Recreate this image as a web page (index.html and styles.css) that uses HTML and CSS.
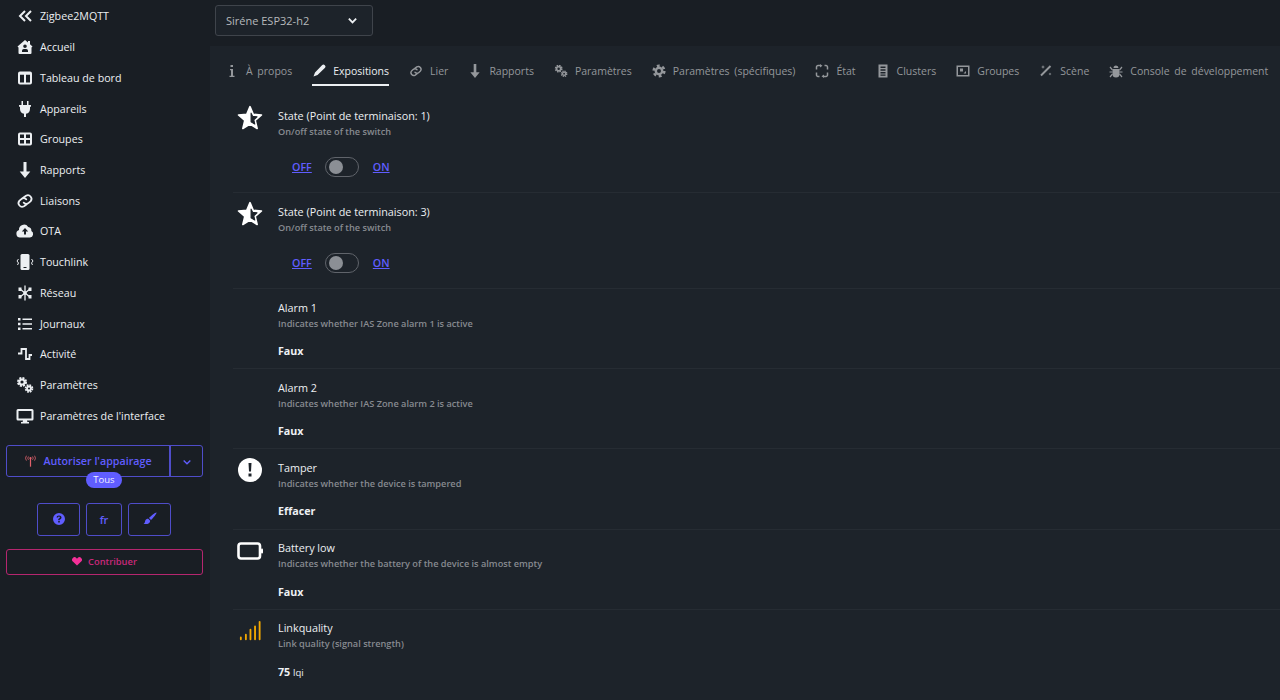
FILE: index.html
```html
<!DOCTYPE html>
<html lang="fr">
<head>
  <meta charset="UTF-8">
  <title>Zigbee2MQTT</title>
  <link rel="stylesheet" href="styles.css">
</head>
<body>

  <svg class="defs" width="0" height="0">
    <symbol id="i-down" viewBox="0 0 16 16"><path d="M6.500 0h3v9.500h3.800L8 16 2.700 9.500h3.800z" fill="currentColor"/></symbol>
    <symbol id="i-link" viewBox="0 0 18 16"><g fill="none" stroke="currentColor" stroke-width="1.800" stroke-linecap="round"><path d="M7.500 4.500 10 2.800a3.600 3.600 0 0 1 4.700 5.300l-2 1.800a3.600 3.600 0 0 1-5-.2"/><path d="M10.500 11.500 8 13.200a3.600 3.600 0 0 1-4.700-5.300l2-1.800a3.600 3.600 0 0 1 5 .2"/></g></symbol>
    <symbol id="i-gears" viewBox="0 0 18 16"><g fill="none" stroke="currentColor"><circle cx="6" cy="5" r="2.600" stroke-width="2"/><circle cx="6" cy="5" r="4" stroke-width="2" stroke-dasharray="2 1.140"/><circle cx="13" cy="11.500" r="2" stroke-width="1.800"/><circle cx="13" cy="11.500" r="3.400" stroke-width="1.800" stroke-dasharray="1.700 .97"/></g></symbol>
    <symbol id="i-star" viewBox="1 1 24 24"><path d="M13 2.500l3 7 7.600.7-5.800 5 1.800 7.500L13 18.700l-6.600 4 1.800-7.500-5.800-5 7.600-.7z" fill="#fff" stroke="#fff" stroke-width="1.500" stroke-linejoin="round"/><path d="M14 8.500l1.500 3 4 .4-3 2.700.9 4-3.400-2z" fill="#1d232a" stroke="#1d232a" stroke-linejoin="round"/></symbol>
  </svg>

  <aside class="sidebar">
    <nav class="side-nav">
      <a class="side-link"><svg class="side-icon" viewBox="0 0 16 16"><path d="M8 3 3 8l5 5M14 3 9 8l5 5" fill="none" stroke="currentColor" stroke-width="2"/></svg>Zigbee2MQTT</a>
      <a class="side-link"><svg class="side-icon" viewBox="0 0 16 16"><path fill-rule="evenodd" d="M8 1l3 2.500V2h2v3.200L15.500 7.500 14.500 8.500V14a1 1 0 0 1-1 1h-11a1 1 0 0 1-1-1V8.500L.5 7.500zM8 5.500a1.800 1.800 0 1 0 0 3.600 1.800 1.800 0 0 0 0-3.600zM5 13h6v-1.200A1.800 1.800 0 0 0 9.200 10H6.800A1.800 1.800 0 0 0 5 11.800z" fill="currentColor"/></svg>Accueil</a>
      <a class="side-link"><svg class="side-icon" viewBox="0 0 16 16"><path fill-rule="evenodd" d="M3 1.500h10a2 2 0 0 1 2 2v9a2 2 0 0 1-2 2H3a2 2 0 0 1-2-2v-9a2 2 0 0 1 2-2zm0 3.300v7.700h4V4.800zm6 0v7.700h4V4.800z" fill="currentColor"/></svg>Tableau de bord</a>
      <a class="side-link"><svg class="side-icon" viewBox="0 0 16 16"><path d="M4.500 0H6v4h4V0h1.500v4h2.500v1.700h-1V8a5 5 0 0 1-4 4.800V16H7v-3.200A5 5 0 0 1 3 8V5.700H2V4h2.500z" fill="currentColor"/></svg>Appareils</a>
      <a class="side-link"><svg class="side-icon" viewBox="0 0 16 16"><path fill-rule="evenodd" d="M3 1.500h10a2 2 0 0 1 2 2v9a2 2 0 0 1-2 2H3a2 2 0 0 1-2-2v-9a2 2 0 0 1 2-2zm0 2v3.500h4V3.500zm6 0v3.500h4V3.500zM3 9v3.500h4V9zm6 0v3.500h4V9z" fill="currentColor"/></svg>Groupes</a>
      <a class="side-link"><svg class="side-icon" viewBox="0 0 16 16"><use href="#i-down"/></svg>Rapports</a>
      <a class="side-link"><svg class="side-icon side-icon-wide" viewBox="0 0 18 16"><use href="#i-link"/></svg>Liaisons</a>
      <a class="side-link"><svg class="side-icon side-icon-wide" viewBox="0 0 18 14"><path fill-rule="evenodd" d="M4 13.500a3.800 3.800 0 0 1-1-7.400A5 5 0 0 1 12.200 3 3.800 3.800 0 0 1 15.400 7 3.500 3.500 0 0 1 14 13.500zM9 4 5.800 7.500h2.200v3h2v-3h2.200z" fill="currentColor"/></svg>OTA</a>
      <a class="side-link"><svg class="side-icon side-icon-wide" viewBox="0 0 18 16"><rect x="4.500" y="0" width="9" height="16" rx="1.500" fill="currentColor"/><rect x="7.500" y="13" width="3" height="1" fill="#191e24"/><path d="M2.500 5 1 7l1.500 2-1 2M15.500 5 17 7l-1.500 2 1 2" fill="none" stroke="currentColor"/></svg>Touchlink</a>
      <a class="side-link"><svg class="side-icon" viewBox="0 0 16 16"><path d="M3 4 8 8 3 12M13 4 8 8l5 4M8 .5v15" fill="none" stroke="currentColor" stroke-width="1.300"/><path d="M1.500 2.500h3V6h-3zM11.500 2.500h3V6h-3zM1.500 10h3v3.500h-3zM11.500 10h3v3.500h-3z" fill="currentColor"/><circle cx="8" cy="8" r="1.800" fill="currentColor"/></svg>Réseau</a>
      <a class="side-link"><svg class="side-icon" viewBox="0 0 16 16"><path d="M1 2h2.500v2.500H1zM1 6.800h2.500v2.500H1zM1 11.500h2.500V14H1zM5.500 2.500H15V4H5.500zM5.500 7.200H15v1.500H5.500zM5.500 12H15v1.500H5.500z" fill="currentColor"/></svg>Journaux</a>
      <a class="side-link"><svg class="side-icon" viewBox="0 0 16 16"><path d="M1 7.500h3.500V3h4.500v10h3.500V9H15" fill="none" stroke="currentColor" stroke-width="1.800"/></svg>Activité</a>
      <a class="side-link"><svg class="side-icon side-icon-wide" viewBox="0 0 18 16"><use href="#i-gears"/></svg>Paramètres</a>
      <a class="side-link"><svg class="side-icon side-icon-wide" viewBox="0 0 18 16"><path fill-rule="evenodd" d="M2 1h14a1.500 1.500 0 0 1 1.500 1.500v8.500A1.500 1.500 0 0 1 16 12.500h-5l.4 1.500H13v1.500H5V14h1.600l.4-1.500H2A1.500 1.500 0 0 1 .5 11V2.500A1.500 1.500 0 0 1 2 1zm.500 2v7.500h13V3z" fill="currentColor"/></svg>Paramètres de l'interface</a>
    </nav>

    <div class="join-wrap">
      <div class="join-group">
        <button class="join-main"><svg class="tower" viewBox="0 0 16 14"><path d="M8 3v11" stroke="currentColor" stroke-width="1.500"/><circle cx="8" cy="3.500" r="1.300" fill="currentColor"/><path d="M5.500 1.500a3 3 0 0 0 0 4M10.500 1.500a3 3 0 0 1 0 4M3 .5a5 5 0 0 0 0 6M13 .5a5 5 0 0 1 0 6" fill="none" stroke="currentColor"/></svg>Autoriser l'appairage</button>
        <button class="join-more"><svg class="chev" viewBox="0 0 12 8"><path d="M2 1.500l4 4 4-4" fill="none" stroke="currentColor" stroke-width="1.600"/></svg></button>
      </div>
      <span class="badge">Tous</span>
    </div>

    <div class="tools">
      <button class="tool tool-wide"><svg class="tool-icon" viewBox="0 0 12 12"><path fill-rule="evenodd" d="M6 0a6 6 0 1 1 0 12A6 6 0 0 1 6 0zm-.8 7.200h1.600v-.7c1.200-.6 1.700-1.200 1.700-2.100C8.500 3.200 7.500 2.400 6 2.400S3.600 3.100 3.500 4.400h1.500c.1-.5.400-.8 1-.8.500 0 .9.300.9.800 0 .4-.3.700-1 1-.5.300-.7.600-.7 1.100zM5.200 8v1.500h1.600V8z" fill="currentColor"/></svg></button>
      <button class="tool tool-lang">fr</button>
      <button class="tool tool-wide"><svg class="tool-icon tool-brush" viewBox="0 0 14 14"><path d="M13.500.5c.5.500-3.500 6-5.500 7.500L6 6C7.500 4 13 0 13.500.5zM5.300 6.800l1.900 1.900c-.3 2.500-2 3.800-6.700 3.300 1.500-1 1.300-2 1.800-3.500.5-1.200 1.800-1.900 3-1.700z" fill="currentColor"/></svg></button>
    </div>

    <button class="donate"><svg class="heart" viewBox="0 0 12 11"><path d="M6 10.500.9 5.500A3 3 0 0 1 5.200 1.200L6 2l.8-.8a3 3 0 0 1 4.300 4.300z" fill="currentColor"/></svg>Contribuer</button>
  </aside>

  <div class="main">
    <header class="topbar">
      <div class="device-select">
        <span>Siréne ESP32-h2</span>
        <svg class="chev-white" viewBox="0 0 12 8"><path d="M2 1.500l4 4 4-4" fill="none" stroke="currentColor" stroke-width="2"/></svg>
      </div>
    </header>

    <section class="panel">
      <div class="tabs">
        <a class="tab"><svg class="tab-icon" viewBox="0 0 14 14"><path d="M5.500 1h2.500v2H5.500zM5 5h3v6.700h1.500V13h-5v-1.300H6V6.300H5z" fill="currentColor"/></svg>À propos</a>
        <a class="tab tab-active"><svg class="tab-icon" viewBox="0 0 14 14"><path d="M10 1.200a1.500 1.500 0 0 1 2.800 2.800L5.500 11 1.500 12.500l1.500-4z" fill="currentColor"/></svg>Expositions</a>
        <a class="tab"><svg class="tab-icon" viewBox="0 0 18 16"><use href="#i-link"/></svg>Lier</a>
        <a class="tab"><svg class="tab-icon" viewBox="0 0 16 16"><use href="#i-down"/></svg>Rapports</a>
        <a class="tab"><svg class="tab-icon" viewBox="0 0 18 16"><use href="#i-gears"/></svg>Paramètres</a>
        <a class="tab"><svg class="tab-icon" viewBox="0 0 14 14"><circle cx="7" cy="7" r="3.200" fill="none" stroke="currentColor" stroke-width="2.400"/><circle cx="7" cy="7" r="5.300" fill="none" stroke="currentColor" stroke-width="2.600" stroke-dasharray="2.800 2.750"/></svg>Paramètres (spécifiques)</a>
        <a class="tab"><svg class="tab-icon" viewBox="0 0 14 14"><path d="M5 1.500H3A1.500 1.500 0 0 0 1.500 3v2.500M9 12.500h2A1.500 1.500 0 0 0 12.500 11V8.500M1.500 8.500V11A1.500 1.500 0 0 0 3 12.500h1.500M12.500 5.500V3A1.500 1.500 0 0 0 11 1.500H9.500" fill="none" stroke="currentColor" stroke-width="1.500"/><path d="M5 0v3.500L7.500 1.700zM9 14v-3.500l-2.500 1.800z" fill="currentColor"/></svg>État</a>
        <a class="tab"><svg class="tab-icon" viewBox="0 0 14 14"><path fill-rule="evenodd" d="M2.500 .5h9v13h-9zM4.500 2.500v1.500h5V2.500zM4.500 5.300v1.500h5V5.300zM4.500 8.100v1.500h5V8.100zM4.500 10.500v1.200h5v-1.200z" fill="currentColor"/></svg>Clusters</a>
        <a class="tab"><svg class="tab-icon" viewBox="0 0 14 14"><path fill-rule="evenodd" d="M.5 1.500h13v11H.5zM2 3v8h10V3z" fill="currentColor"/><path d="M4 4.500h3v3H4zM7.500 9.500 10 7v2.500z" fill="currentColor"/></svg>Groupes</a>
        <a class="tab"><svg class="tab-icon" viewBox="0 0 14 14"><path d="M11.500 2 2 11.500" stroke="currentColor" stroke-width="2"/><path d="M4 1l.5 1.500L6 3l-1.500.5L4 5l-.5-1.500L2 3l1.500-.5zM11 8.500l.4 1.100 1.100.4-1.100.4-.4 1.100-.4-1.100-1.100-.4 1.100-.4z" fill="currentColor"/></svg>Scène</a>
        <a class="tab"><svg class="tab-icon" viewBox="0 0 14 14"><path d="M4.500 4a2.500 2.500 0 0 1 5 0zM4 5h6a1 1 0 0 1 .5 1v4a3.500 3.500 0 0 1-7 0V6A1 1 0 0 1 4 5z" fill="currentColor"/><path d="M1 3l2.500 3M13 3l-2.500 3M.5 8h3M13.500 8h-3M1 13l2.500-3M13 13l-2.500-3" stroke="currentColor" stroke-width="1.200"/></svg>Console de développement</a>
      </div>

      <div class="row row-tall">
        <svg class="row-icon" viewBox="0 0 26 26"><use href="#i-star"/></svg>
        <div class="row-body">
          <div class="row-title">State (Point de terminaison: 1)</div>
          <div class="row-desc">On/off state of the switch</div>
          <div class="switch-line">
            <a class="switch-label">OFF</a>
            <span class="switch"><span class="knob"></span></span>
            <a class="switch-label">ON</a>
          </div>
        </div>
      </div>

      <div class="row row-tall">
        <svg class="row-icon" viewBox="0 0 26 26"><use href="#i-star"/></svg>
        <div class="row-body">
          <div class="row-title">State (Point de terminaison: 3)</div>
          <div class="row-desc">On/off state of the switch</div>
          <div class="switch-line">
            <a class="switch-label">OFF</a>
            <span class="switch"><span class="knob"></span></span>
            <a class="switch-label">ON</a>
          </div>
        </div>
      </div>

      <div class="row">
        <span class="row-icon"></span>
        <div class="row-body">
          <div class="row-title">Alarm 1</div>
          <div class="row-desc">Indicates whether IAS Zone alarm 1 is active</div>
          <div class="row-value">Faux</div>
        </div>
      </div>

      <div class="row">
        <span class="row-icon"></span>
        <div class="row-body">
          <div class="row-title">Alarm 2</div>
          <div class="row-desc">Indicates whether IAS Zone alarm 2 is active</div>
          <div class="row-value">Faux</div>
        </div>
      </div>

      <div class="row">
        <svg class="row-icon" viewBox="0 0 26 26"><circle cx="13" cy="13" r="12" fill="#fff"/><path d="M11.500 6h3l-.5 8.500h-2zM11.500 16.500h3v3h-3z" fill="#1d232a"/></svg>
        <div class="row-body">
          <div class="row-title">Tamper</div>
          <div class="row-desc">Indicates whether the device is tampered</div>
          <div class="row-value">Effacer</div>
        </div>
      </div>

      <div class="row">
        <svg class="row-icon" viewBox="0 0 26 26"><rect x="1.500" y="5.500" width="21.500" height="15" rx="2.500" fill="none" stroke="#fff" stroke-width="2.600"/><rect x="24" y="10.500" width="2" height="5" rx="1" fill="#fff"/></svg>
        <div class="row-body">
          <div class="row-title">Battery low</div>
          <div class="row-desc">Indicates whether the battery of the device is almost empty</div>
          <div class="row-value">Faux</div>
        </div>
      </div>

      <div class="row">
        <svg class="row-icon signal" viewBox="0 0 24 22"><path d="M2 20v-2M7.500 20v-5M12.500 20V9.500M17.500 20V6M22.500 20V1" fill="none" stroke="#f3a800" stroke-width="2" stroke-linecap="round"/></svg>
        <div class="row-body">
          <div class="row-title">Linkquality</div>
          <div class="row-desc">Link quality (signal strength)</div>
          <div class="row-value">75 <span class="unit">lqi</span></div>
        </div>
      </div>
    </section>
  </div>

</body>
</html>
```

FILE: styles.css
```css
body {
  margin: 0;
  height: 700px;
  overflow: hidden;
  display: flex;
  background-color: #191e24;
  color: #ecf0f3;
  font-family: "Open Sans", "Noto Sans", sans-serif;
  font-size: 10.7px;
}

button {
  font-family: inherit;
  background: none;
  cursor: pointer;
}

.defs {
  position: absolute;
}

/* sidebar */
.sidebar {
  width: 210px;
  flex-shrink: 0;
  display: flex;
  flex-direction: column;
  background-color: #191e24;
}

.side-nav {
  display: flex;
  flex-direction: column;
  padding-top: 1px;
}

.side-link {
  height: 30.72px;
  display: flex;
  align-items: center;
  padding-left: 17px;
  color: #eceff2;
}

.side-icon {
  width: 16px;
  height: 16px;
  margin-right: 7px;
  flex-shrink: 0;
}

.side-icon-wide {
  width: 18px;
  margin-left: -1px;
  margin-right: 6px;
}

.join-wrap {
  position: relative;
  margin: 13.500px 7px 0 6px;
}

.join-group {
  height: 32px;
  display: flex;
  border: 1px solid #4f4dc9;
  border-radius: 3px;
  box-sizing: border-box;
}

.join-main {
  flex: 1;
  border: none;
  border-right: 2px solid #4f4dc9;
  color: #605dff;
  font-size: 10.700px;
  font-weight: 600;
  display: flex;
  align-items: center;
  justify-content: center;
  gap: 6px;
  padding: 0;
}

.tower {
  width: 13px;
  height: 12px;
  color: #e0616b;
}

.join-more {
  width: 31px;
  border: none;
  color: #605dff;
  padding: 0;
}

.chev {
  width: 10px;
  height: 7px;
}

.badge {
  position: absolute;
  left: 80px;
  top: 27px;
  width: 36px;
  height: 16px;
  border-radius: 8px;
  background-color: #605dff;
  color: #f0f0ff;
  font-size: 9.500px;
  line-height: 16px;
  text-align: center;
}

.tools {
  display: flex;
  gap: 6px;
  margin: 26px 0 0 37px;
}

.tool {
  height: 33px;
  border: 1px solid #4f4dc9;
  border-radius: 3px;
  color: #605dff;
  padding: 0;
  display: flex;
  align-items: center;
  justify-content: center;
}

.tool-wide {
  width: 43px;
}

.tool-lang {
  width: 36px;
  font-size: 11px;
  font-weight: 600;
}

.tool-icon {
  width: 12px;
  height: 12px;
}

.tool-brush {
  width: 14px;
  height: 14px;
}

.donate {
  height: 26px;
  margin: 13px 7px 0 6px;
  border: 1px solid #b5266f;
  border-radius: 3px;
  color: #c9297b;
  font-size: 9.300px;
  font-weight: 600;
  display: flex;
  align-items: center;
  justify-content: center;
  gap: 6px;
  padding: 0;
}

.heart {
  width: 10px;
  height: 9px;
  color: #f43098;
}

/* main */
.main {
  flex: 1;
  min-width: 0;
  display: flex;
  flex-direction: column;
}

.topbar {
  height: 46px;
  flex-shrink: 0;
  padding: 5px 0 0 5px;
  box-sizing: border-box;
}

.device-select {
  width: 158px;
  height: 31px;
  box-sizing: border-box;
  display: flex;
  align-items: center;
  justify-content: space-between;
  padding: 0 14px 0 10px;
  background-color: #1d232a;
  border: 1px solid #3f444b;
  border-radius: 3px;
  color: #b6b9bc;
  font-size: 11px;
}

.chev-white {
  width: 11px;
  height: 8px;
  color: #eceff2;
}

.panel {
  flex: 1;
  background-color: #1d232a;
}

.tabs {
  display: flex;
  gap: 20px;
  height: 51px;
  padding-left: 15px;
  align-items: flex-start;
  white-space: nowrap;
  font-size: 10.500px;
  word-spacing: 2px;
}

.tab {
  display: flex;
  align-items: center;
  gap: 7px;
  height: 40px;
  padding-top: 12px;
  padding-bottom: 2px;
  box-sizing: border-box;
  color: #94979b;
}

.tab-icon {
  width: 14px;
  height: 14px;
  flex-shrink: 0;
}

.tab-active {
  color: #eceff2;
  border-bottom: 2px solid #eceff2;
  padding-bottom: 0;
}

.row {
  height: 80.200px;
  margin-left: 23px;
  padding-top: 10px;
  box-sizing: border-box;
  display: flex;
  border-bottom: 1px solid #262c33;
}

.row:last-child {
  border-bottom: none;
}

.row-tall {
  height: 96px;
}

.row-icon {
  width: 26px;
  height: 26px;
  margin: -2px 15px 0 4px;
  flex-shrink: 0;
}

.row-body {
  padding-top: .5px;
}

.row-title {
  color: #eceff2;
  font-size: 10.800px;
  line-height: 16px;
}

.row-desc {
  color: #878a90;
  font-size: 9.200px;
  font-weight: 600;
  line-height: 15px;
}

.row-value {
  margin-top: 12.500px;
  color: #eef1f4;
  font-weight: 700;
  line-height: 16px;
}

.unit {
  font-weight: 400;
  font-size: 9.500px;
}

.switch-line {
  display: flex;
  align-items: center;
  gap: 13px;
  margin: 18px 0 0 14px;
}

.switch-label {
  color: #605dff;
  font-weight: 600;
  text-decoration: underline;
}

.switch {
  width: 34px;
  height: 20px;
  margin-right: 1px;
  box-sizing: border-box;
  border: 1px solid #60646b;
  border-radius: 10px;
  display: flex;
  align-items: center;
  padding-left: 3px;
}

.knob {
  width: 14px;
  height: 14px;
  border-radius: 50%;
  background-color: #8b8f95;
}

.signal {
  padding: 2px;
  box-sizing: border-box;
}
```
